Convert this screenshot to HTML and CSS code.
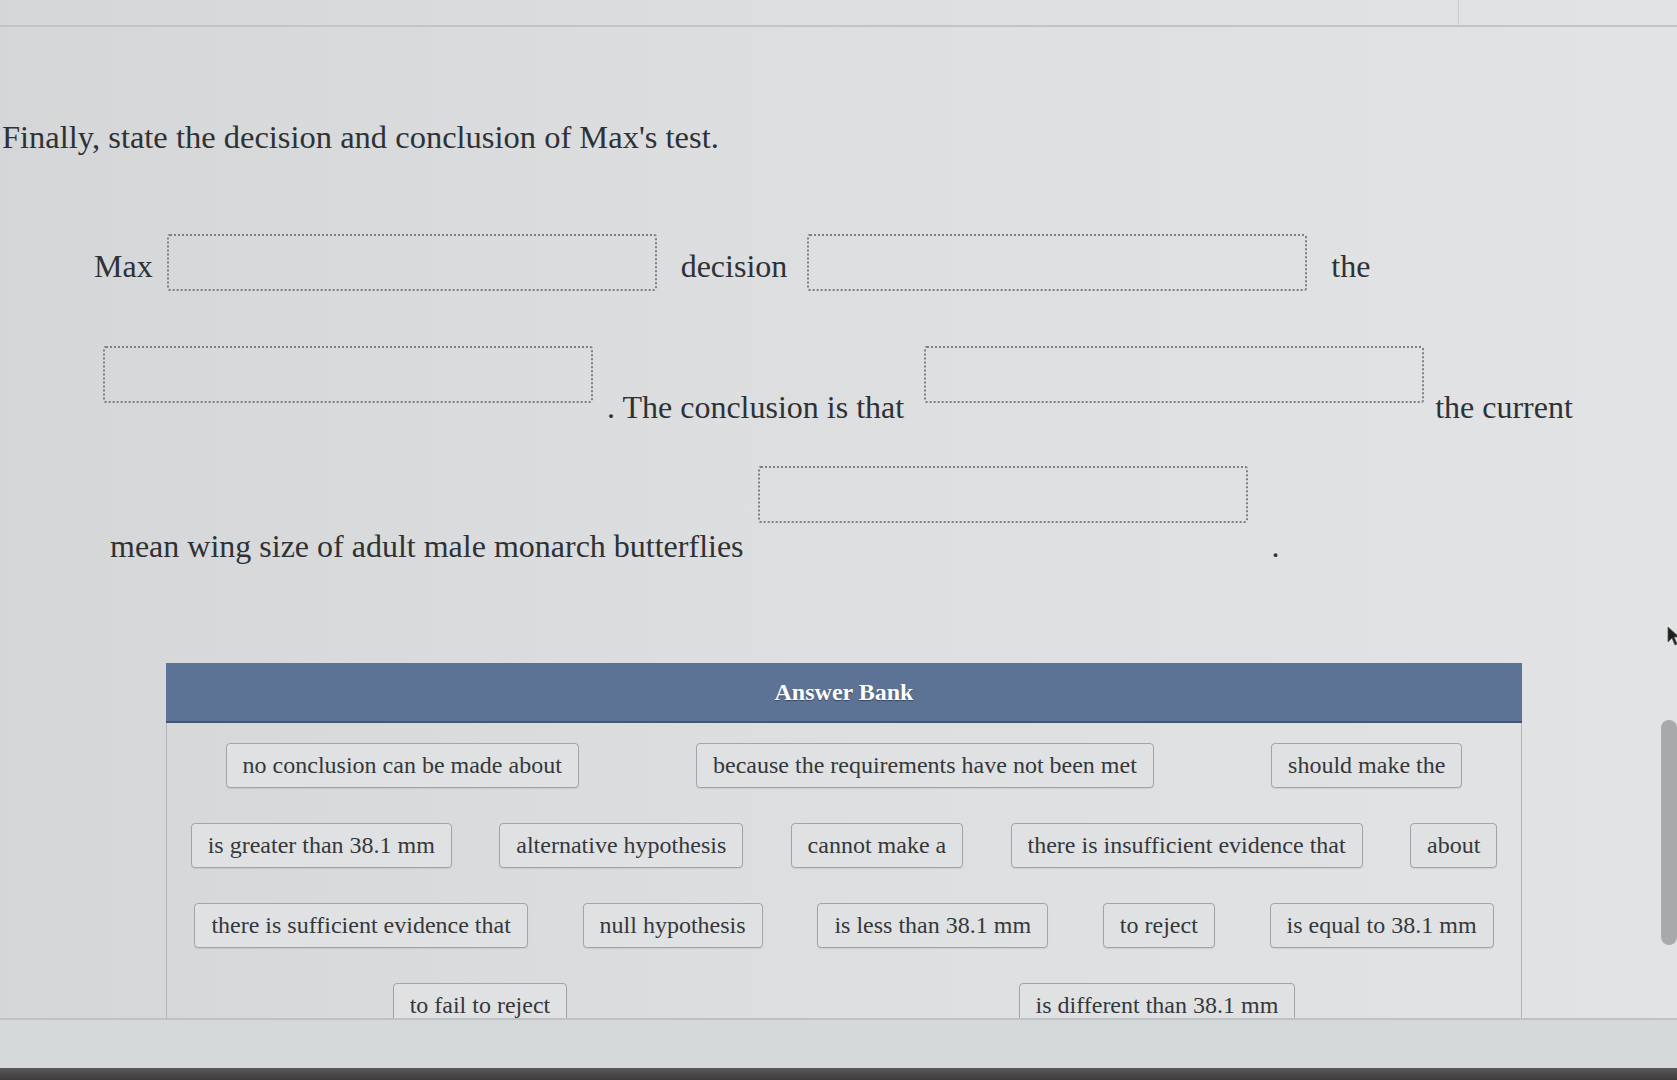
FILE: index.html
```html
<!DOCTYPE html>
<html lang="en">
<head>
  <meta charset="UTF-8" />
  <meta name="viewport" content="width=device-width, initial-scale=1.0" />
  <title>Decision and conclusion</title>
  <link rel="stylesheet" href="styles.css">
</head>
<body>
  <div class="page">
    <div class="topbar">
      <div class="topbar-tools"></div>
    </div>

    <p class="prompt">Finally, state the decision and conclusion of Max's test.</p>

    <div class="fill">
      <div class="fill-row fill-row-1">
        <span class="word">Max</span>
        <div class="blank"></div>
        <span class="word spaced">decision</span>
        <div class="blank wide"></div>
        <span class="word spaced">the</span>
      </div>
      <div class="fill-row fill-row-2">
        <div class="blank"></div>
        <span class="word">. The conclusion is that</span>
        <div class="blank wide"></div>
        <span class="word spaced">the current</span>
      </div>
      <div class="fill-row fill-row-3">
        <span class="word">mean wing size of adult male monarch butterflies</span>
        <div class="blank"></div>
        <span class="word spaced">.</span>
      </div>
    </div>

    <div class="bank">
      <div class="bank-head">Answer Bank</div>
      <div class="bank-body">
        <div class="bank-row">
          <span class="chip">no conclusion can be made about</span>
          <span class="chip">because the requirements have not been met</span>
          <span class="chip">should make the</span>
        </div>
        <div class="bank-row">
          <span class="chip">is greater than 38.1 mm</span>
          <span class="chip">alternative hypothesis</span>
          <span class="chip">cannot make a</span>
          <span class="chip">there is insufficient evidence that</span>
          <span class="chip">about</span>
        </div>
        <div class="bank-row">
          <span class="chip">there is sufficient evidence that</span>
          <span class="chip">null hypothesis</span>
          <span class="chip">is less than 38.1 mm</span>
          <span class="chip">to reject</span>
          <span class="chip">is equal to 38.1 mm</span>
        </div>
        <div class="bank-row">
          <span class="chip">to fail to reject</span>
          <span class="chip">is different than 38.1 mm</span>
        </div>
      </div>
    </div>
  </div>

  <div class="statusbar"></div>
  <div class="bezel"></div>

  <div class="scroll-thumb"></div>
  <svg class="cursor" width="14" height="20" viewBox="0 0 14 20">
    <path d="M1 1 L1 16 L5 12 L8 19 L10 18 L7 11 L12 11 Z" fill="#1e1e1e" stroke="#555" stroke-width="0.8"/>
  </svg>
</body>
</html>
```

FILE: styles.css
```css
body {
  margin: 0;
  width: 1677px;
  height: 1080px;
  overflow: hidden;
  position: relative;
  display: flex;
  flex-direction: column;
  font-family: 'Liberation Serif', 'Times New Roman', serif;
  color: #2f3235;
  background: linear-gradient(90deg, #d4d6d7 0%, #dcdedf 45%, #e1e3e4 100%);
}

.page {
  height: 1018px;
  flex: none;
  overflow: hidden;
}

.topbar {
  height: 25px;
  display: flex;
  border-bottom: 2px solid #c2c5c7;
}

.topbar-tools {
  flex: 1;
  margin-left: 1458px;
  border-left: 1px solid #c9cbcd;
}

.prompt {
  margin: 90px 0 0 2px;
  font-size: 32.5px;
  line-height: 40px;
  white-space: nowrap;
}

.fill {
  padding-left: 94px;
  font-size: 32px;
  line-height: 40px;
}

.fill-row {
  display: flex;
}

.fill-row-1 {
  margin-top: 77px;
  align-items: flex-end;
}

.fill-row-1 .word {
  margin-bottom: 5px;
}

.fill-row-2 {
  margin-top: 55px;
  margin-left: -5px;
  align-items: flex-start;
}

.fill-row-2 .word {
  margin-top: 41px;
}

.fill-row-2 .word.spaced {
  margin-left: -3px;
}

.fill-row-3 {
  margin-top: 39px;
  margin-left: 16px;
  align-items: flex-start;
}

.fill-row-3 .word {
  margin-top: 60px;
}

.word {
  white-space: nowrap;
}

.word.spaced {
  margin-left: 10px;
}

.blank {
  flex: none;
  width: 490px;
  height: 57px;
  box-sizing: border-box;
  margin: 0 14px;
  border: 2px dotted #7e8184;
  border-radius: 3px;
}

.blank.wide {
  width: 500px;
  margin-left: 20px;
}

.bank {
  width: 1356px;
  margin: 97px 0 0 166px;
}

.bank-head {
  height: 60px;
  box-sizing: border-box;
  background: #5d7395;
  border-bottom: 2px solid #445670;
  color: #fff;
  font-size: 24px;
  font-weight: bold;
  line-height: 58px;
  text-align: center;
  text-shadow: 0 1px 1px rgba(0,0,0,0.4);
}

.bank-body {
  height: 400px;
  padding-top: 20px;
  box-sizing: border-box;
  display: flex;
  flex-direction: column;
  gap: 35px;
  border: 1px solid #b3b6b8;
  border-top: none;
}

.bank-row {
  display: flex;
  justify-content: space-around;
}

.chip {
  height: 45px;
  box-sizing: border-box;
  padding: 0 16px;
  border: 1px solid #a2a5a8;
  border-radius: 4px;
  background: #dfe1e2;
  box-shadow: 0 1px 1px rgba(0,0,0,0.08);
  color: #35383b;
  font-size: 24px;
  line-height: 43px;
  white-space: nowrap;
}

.statusbar {
  height: 50px;
  flex: none;
  box-sizing: border-box;
  border-top: 2px solid #bfc2c4;
  background: #d6d9da;
}

.bezel {
  height: 12px;
  flex: none;
  background: linear-gradient(#5a5758, #3e3b3c);
}

.scroll-thumb {
  position: absolute;
  left: 1661px;
  top: 720px;
  width: 16px;
  height: 225px;
  border-radius: 8px;
  background: #a7a9ab;
}

.cursor {
  position: absolute;
  left: 1667px;
  top: 626px;
}
```
